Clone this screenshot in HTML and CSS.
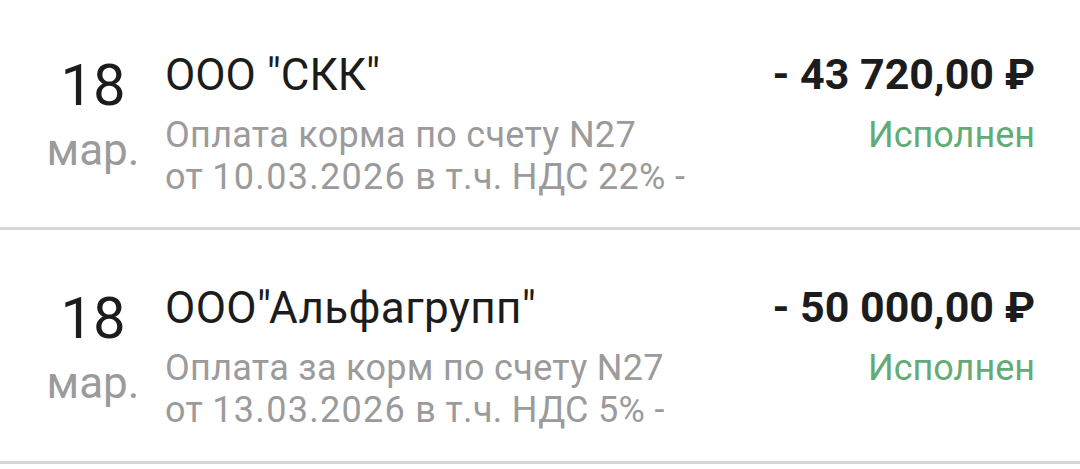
FILE: index.html
```html
<!DOCTYPE html>
<html lang="ru">
<head>
    <meta charset="UTF-8">
    <meta name="viewport" content="width=device-width, initial-scale=1.0">
    <title>Операции</title>
    <link rel="stylesheet" href="styles.css">
</head>
<body>
    <!-- Список операций -->
    <div class="ops-list">
        <div class="op-row">
            <div class="op-date">
                <div class="op-day">18</div>
                <div class="op-month">мар.</div>
            </div>
            <div class="op-info">
                <div class="op-title">ООО "СКК"</div>
                <div class="op-desc">Оплата корма по счету N27<br>от <span class="op-num">10.03.2026</span> в т.ч. НДС 22% -</div>
            </div>
            <div class="op-sum">
                <div class="op-amount">- 43 720,00 ₽</div>
                <div class="op-status">Исполнен</div>
            </div>
        </div>
        <div class="op-row op-row-second">
            <div class="op-date">
                <div class="op-day">18</div>
                <div class="op-month">мар.</div>
            </div>
            <div class="op-info">
                <div class="op-title">ООО"Альфагрупп"</div>
                <div class="op-desc">Оплата за корм по счету N27<br>от <span class="op-num">13.03.2026</span> в т.ч. НДС 5% -</div>
            </div>
            <div class="op-sum">
                <div class="op-amount">- 50 000,00 ₽</div>
                <div class="op-status">Исполнен</div>
            </div>
        </div>
    </div>
</body>
</html>
```

FILE: styles.css
```css
/* Общие стили */
body {
    margin: 0;
    background-color: #fff;
    font-family: Roboto, "Noto Sans", sans-serif;
    color: #1f1f1f;
}
.ops-list {
    display: flex;
    flex-direction: column;
}
.op-row {
    display: flex;
    align-items: flex-start;
    height: 227px;
    padding: 0 45px 0 40px;
    border-bottom: 3px solid #d6d7d8;
}
.op-row > div {
    padding-top: 49px;
}
.op-row-second {
    height: 231px;
}
.op-row-second > div {
    padding-top: 52px;
}
/* Дата */
.op-date {
    width: 106px;
    text-align: center;
}
.op-day {
    margin-top: 5px;
    font-size: 58px;
    line-height: 62px;
    color: #1c1c1c;
}
.op-month {
    margin-top: 9px;
    font-size: 44px;
    line-height: 50px;
    color: #9b9b9b;
}
/* Описание */
.op-info {
    flex: 1;
    margin-left: 19px;
}
.op-title {
    font-size: 44px;
    line-height: 52px;
    color: #1c1c1c;
}
.op-row-second .op-title {
    letter-spacing: 0.4px;
}
.op-desc {
    margin-top: 13px;
    font-size: 36px;
    line-height: 42px;
    letter-spacing: 0.3px;
    color: #9b9b9b;
}
.op-num {
    letter-spacing: 1.3px;
}
/* Сумма */
.op-sum {
    text-align: right;
}
.op-amount {
    font-size: 43px;
    line-height: 50px;
    font-weight: bold;
    color: #1c1c1c;
}
.op-status {
    margin-top: 15px;
    font-size: 36px;
    line-height: 42px;
    color: #63ab76;
}
```
